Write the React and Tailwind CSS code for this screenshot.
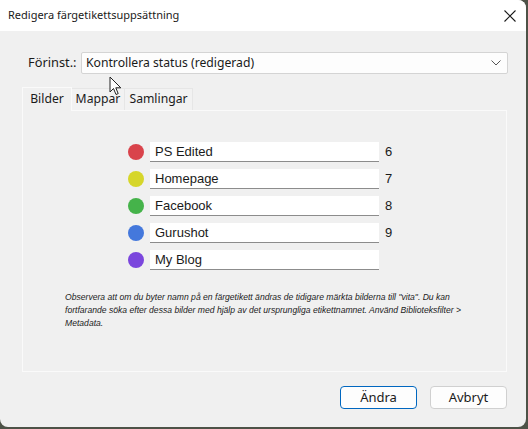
import React from "react";

const labels = [
  { color: "bg-[#d9434b]", name: "PS Edited", key: "6" },
  { color: "bg-[#d6d62a]", name: "Homepage", key: "7" },
  { color: "bg-[#45b34a]", name: "Facebook", key: "8" },
  { color: "bg-[#4478dc]", name: "Gurushot", key: "9" },
  { color: "bg-[#7b46dd]", name: "My Blog", key: "" },
];

const ui = { fontFamily: '"Noto Sans", "Open Sans", sans-serif' };
const tahoma = { fontFamily: '"Liberation Sans", Arial, sans-serif' };

export default function App() {
  return (
    <div className="w-[528px] h-[429px] bg-[#4d5247] relative overflow-hidden">
      <div className="w-[526px] h-[427px] bg-[#f0f0f0] rounded-lg rounded-tl-none overflow-hidden flex flex-col text-[#1a1a1a]" style={ui}>
        {/* title bar */}
        <div className="h-[31px] bg-white flex items-center justify-between pl-[8px] pr-[8px] shrink-0">
          <span className="text-[11px]">Redigera färgetikettsuppsättning</span>
          <svg width="14" height="14" viewBox="0 0 14 14" className="mr-[1px]">
            <path d="M1.5 1.5 L12.5 12.5 M12.5 1.5 L1.5 12.5" stroke="#1a1a1a" strokeWidth="1.1" />
          </svg>
        </div>

        {/* preset row */}
        <div className="flex items-center mt-[21px] pl-[28px]">
          <span className="text-[12.8px] w-[53px]">Förinst.:</span>
          <div className="w-[427px] h-[22px] bg-[#fdfdfd] border border-[#d4d4d4] rounded-[2px] flex items-center justify-between pl-[4px] pr-[6px]">
            <span className="text-[12.2px]">Kontrollera status (redigerad)</span>
            <svg width="10" height="6" viewBox="0 0 10 6">
              <path d="M0.5 0.5 L5 5 L9.5 0.5" fill="none" stroke="#555" strokeWidth="1" />
            </svg>
          </div>
        </div>

        {/* tabs */}
        <div className="flex items-end mt-[12px] ml-[22px] h-[24px] text-[12.2px]">
          <div className="w-[50px] h-[24px] flex items-center justify-center bg-[#f0f0f0] border border-b-0 border-[#fafafa] -mb-px relative z-10">Bilder</div>
          <div className="w-[53px] h-[22px] flex items-center justify-center bg-[#f2f2f2] border border-b-0 border-l-0 border-[#e6e6e6]">Mappar</div>
          <div className="w-[68px] h-[22px] flex items-center justify-center bg-[#f2f2f2] border border-b-0 border-l-0 border-[#e6e6e6]">Samlingar</div>
        </div>

        {/* panel */}
        <div className="ml-[22px] w-[485px] h-[262px] border border-[#fafafa] bg-[#f0f0f0] flex flex-col">
          <div className="flex flex-col gap-[7px] pt-[31px] pl-[105px]">
            {labels.map((l) => (
              <div key={l.name} className="flex items-center h-[20px]">
                <span className={`w-[16px] h-[16px] rounded-full ${l.color}`} />
                <div className="ml-[6px] w-[229px] h-[20px] bg-white border-b border-[#8c8c8c] flex items-center pl-[5px] text-[13px]" style={tahoma}>
                  {l.name}
                </div>
                <span className="ml-[6px] text-[13px]" style={tahoma}>{l.key}</span>
              </div>
            ))}
          </div>
          <p className="mt-[21px] ml-[42px] w-[400px] text-[8.6px] italic leading-[13px] text-[#222]" style={tahoma}>
            Observera att om du byter namn på en färgetikett ändras de tidigare märkta bilderna till "vita". Du kan fortfarande söka efter dessa bilder med hjälp av det ursprungliga etikettnamnet. Använd Biblioteksfilter &gt; Metadata.
          </p>
        </div>

        {/* buttons */}
        <div className="flex justify-end gap-[13px] mt-[14px] pr-[19px]">
          <button className="w-[77px] h-[23px] rounded-[4px] bg-[#fdfdfd] border border-[#0067c0] text-[13px]">Ändra</button>
          <button className="w-[77px] h-[23px] rounded-[4px] bg-[#fdfdfd] border border-[#d0d0d0] text-[13px]">Avbryt</button>
        </div>
      </div>

      {/* mouse cursor */}
      <svg className="absolute left-[109px] top-[76px]" width="14" height="21" viewBox="0 0 14 21">
        <path d="M1 1 L1 16 L4.5 12.5 L7 18.5 L9.2 17.6 L6.8 11.8 L11.8 11.8 Z" fill="#fff" stroke="#222" strokeWidth="1" strokeLinejoin="round" />
      </svg>
    </div>
  );
}
